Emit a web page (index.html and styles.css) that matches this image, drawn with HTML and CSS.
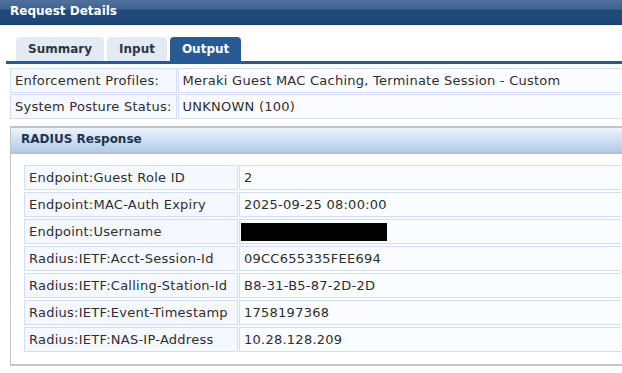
FILE: index.html
```html
<!DOCTYPE html>
<html lang="en">
<head>
    <meta charset="UTF-8">
    <title>Request Details</title>
    <link rel="stylesheet" href="styles.css">
</head>
<body>
    <div class="titlebar">Request Details</div>

    <div class="tabs">
        <div class="tab">Summary</div>
        <div class="tab">Input</div>
        <div class="tab active">Output</div>
    </div>

    <table class="info">
        <tr>
            <td class="label">Enforcement Profiles:</td>
            <td>Meraki Guest MAC Caching, Terminate Session - Custom</td>
        </tr>
        <tr>
            <td class="label">System Posture Status:</td>
            <td>UNKNOWN (100)</td>
        </tr>
    </table>

    <div class="panel">
        <div class="panel-head">RADIUS Response</div>
        <div class="panel-body">
            <table class="attrs">
                <tr><td class="label">Endpoint:Guest Role ID</td><td>2</td></tr>
                <tr><td class="label">Endpoint:MAC-Auth Expiry</td><td>2025-09-25 08:00:00</td></tr>
                <tr><td class="label">Endpoint:Username</td><td><span class="redacted"></span></td></tr>
                <tr><td class="label">Radius:IETF:Acct-Session-Id</td><td>09CC655335FEE694</td></tr>
                <tr><td class="label">Radius:IETF:Calling-Station-Id</td><td>B8-31-B5-87-2D-2D</td></tr>
                <tr><td class="label">Radius:IETF:Event-Timestamp</td><td>1758197368</td></tr>
                <tr><td class="label">Radius:IETF:NAS-IP-Address</td><td>10.28.128.209</td></tr>
            </table>
        </div>
    </div>
</body>
</html>
```

FILE: styles.css
```css
body {
    margin: 0;
    font-family: "DejaVu Sans", Verdana, sans-serif;
    font-size: 13px;
    color: #2e2e2e;
    background: #fff;
}
.titlebar {
    height: 25px;
    padding: 3px 0 0 10px;
    box-sizing: border-box;
    line-height: 17px;
    font-size: 12px;
    font-weight: bold;
    color: #fff;
    background: linear-gradient(#4f709c 0, #3f6392 9px, #224a7b 10px, #1e4576 24px, #173c6b 25px);
}
.tabs {
    display: flex;
    gap: 3px;
    margin: 12px 0 0 6px;
    padding-left: 10px;
    border-bottom: 3px solid #285a96;
}
.tab {
    height: 24px;
    line-height: 25px;
    padding: 0 12px;
    font-size: 12px;
    font-weight: bold;
    color: #2f3540;
    background: #e2eaf5;
    border-radius: 4px 4px 0 0;
}
.tab.active {
    background: #285a96;
    color: #fff;
}
table {
    border-collapse: separate;
    border-spacing: 1px;
}
td {
    height: 23px;
    padding: 0 4px;
    border: 1px solid #cfdff8;
    background: #fbfcff;
    white-space: nowrap;
    letter-spacing: 0.25px;
}
td:last-child {
    border-right: none;
}
td.label {
    background: #f5f9ff;
}
.info {
    margin: 3px 0 0 9px;
    width: 613px;
}
.info td.label {
    width: 156px;
}
.panel {
    margin: 6px 0 0 10px;
    border-left: 1px solid #c4c4c4;
    border-top: 2px solid #c0c0c8;
    border-bottom: 2px solid #c8c8c8;
}
.panel-head {
    height: 24px;
    line-height: 23px;
    padding-left: 10px;
    font-size: 12px;
    font-weight: bold;
    color: #1f3350;
    background: linear-gradient(#edf4fd, #b1cbea);
    border-bottom: 2px solid #c0c0c4;
}
.panel-body {
    padding: 9px 0 10px 12px;
}
.attrs {
    width: 100%;
    border-spacing: 1px 2px;
}
.attrs td.label {
    width: 204px;
}
.redacted {
    display: inline-block;
    width: 146px;
    height: 18px;
    margin-left: -3px;
    background: #000;
    vertical-align: middle;
}
```
